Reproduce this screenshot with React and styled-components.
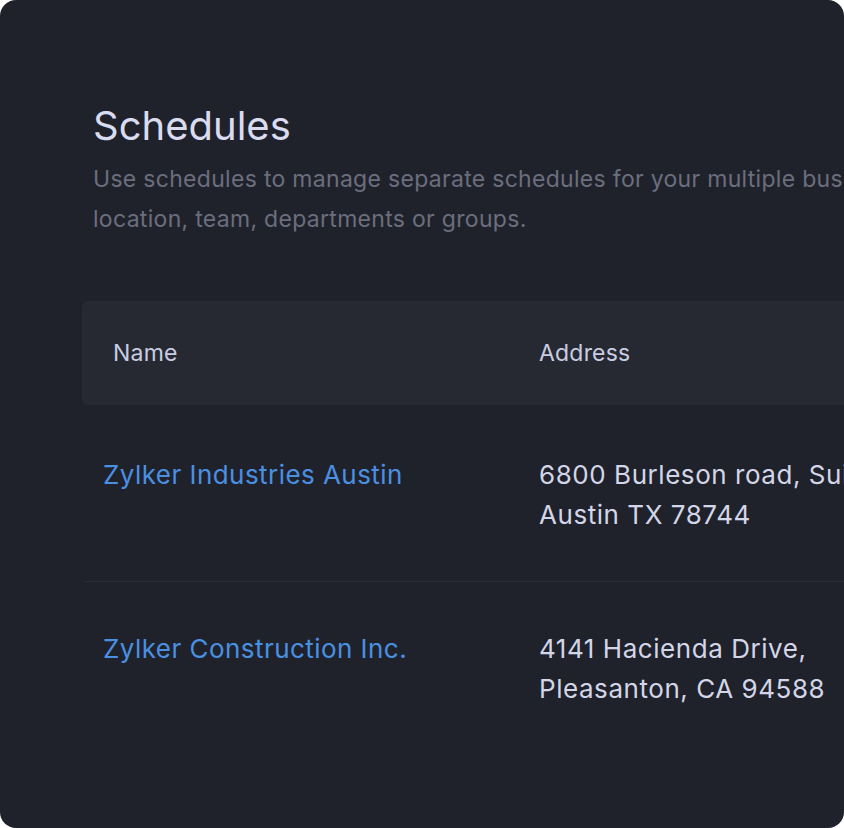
import styled, { createGlobalStyle } from "styled-components";

const GlobalStyle = createGlobalStyle`
  html, body {
    margin: 0;
    padding: 0;
    background: #ffffff;
  }
  body {
    font-family: Inter, "Noto Sans", sans-serif;
  }
`;

const Panel = styled.div`
  width: 844px;
  height: 828px;
  border-radius: 16px;
  overflow: hidden;
  background: #20222b;
  padding: 102px 0 0 82px;
  box-sizing: border-box;
`;

const Intro = styled.div`
  padding-left: 11px;
  width: 900px;
`;

const Title = styled.h1`
  margin: 0;
  font-size: 40px;
  line-height: 48px;
  font-weight: 400;
  color: #d9dcf0;
`;

const Desc = styled.p`
  margin: 9px 0 0;
  font-size: 23px;
  line-height: 40px;
  letter-spacing: 0.3px;
  color: #6b6e7e;
`;

const Table = styled.div`
  width: 1100px;
  margin-top: 62px;
`;

const HeadRow = styled.div`
  display: grid;
  grid-template-columns: 457px 1fr;
  align-items: center;
  height: 104px;
  background: #262932;
  border-radius: 6px;
`;

const HeadCell = styled.div`
  font-size: 23px;
  letter-spacing: 0.2px;
  color: #c9cde2;
  padding-left: ${(p) => p.$pad || 0}px;
`;

const Row = styled.div`
  display: grid;
  grid-template-columns: 455px 1fr;
  margin-left: 2px;
  padding: ${(p) => (p.$first ? "50px 0 46px" : "47px 0 46px")};
  border-top: ${(p) => (p.$first ? "none" : "1px solid #2a2d37")};
`;

const NameCell = styled.a`
  padding-left: 19px;
  font-size: 26px;
  line-height: 40px;
  letter-spacing: 0.45px;
  color: #4a90e2;
  text-decoration: none;
  align-self: start;
`;

const AddressCell = styled.div`
  font-size: 26px;
  line-height: 40px;
  letter-spacing: 0.55px;
  color: #d3d6e8;
  white-space: nowrap;
`;

const rows = [
  { name: "Zylker Industries Austin", address: ["6800 Burleson road, Suite 200,", "Austin TX 78744"] },
  { name: "Zylker Construction Inc.", address: ["4141 Hacienda Drive,", "Pleasanton, CA 94588"] },
];

export default function App() {
  return (
    <>
      <GlobalStyle />
      <Panel>
        <Intro>
          <Title>Schedules</Title>
          <Desc>
            Use schedules to manage separate schedules for your multiple business
            <br />
            location, team, departments or groups.
          </Desc>
        </Intro>
        <Table>
          <HeadRow>
            <HeadCell $pad={31}>Name</HeadCell>
            <HeadCell>Address</HeadCell>
          </HeadRow>
          {rows.map((r, i) => (
            <Row key={r.name} $first={i === 0}>
              <NameCell href="#">{r.name}</NameCell>
              <AddressCell>
                {r.address.map((line) => (
                  <div key={line}>{line}</div>
                ))}
              </AddressCell>
            </Row>
          ))}
        </Table>
      </Panel>
    </>
  );
}
